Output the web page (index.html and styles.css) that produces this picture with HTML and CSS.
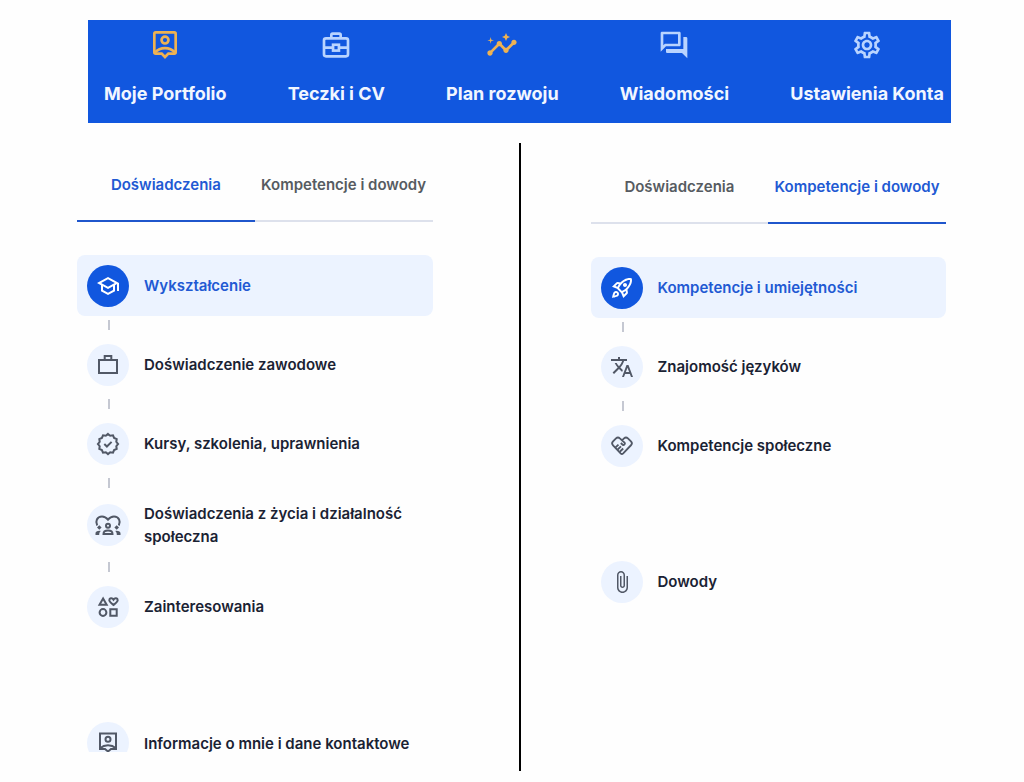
FILE: index.html
```html
<!DOCTYPE html>
<html lang="pl">
<head>
    <meta charset="UTF-8">
    <meta name="viewport" content="width=device-width, initial-scale=1.0">
    <title>Moje Portfolio</title>
    <link rel="stylesheet" href="styles.css">
</head>

<body>
    <nav class="main-nav">
        <a class="nav-link active" href="#portfolio">
            <svg viewBox="0 0 24 24" class="line"><path d="M5 2.500h14a1 1 0 0 1 1 1v14a1 1 0 0 1-1 1h-4.500L12 21l-2.500-2.500H5a1 1 0 0 1-1-1v-14a1 1 0 0 1 1-1z"/><circle cx="12" cy="8.300" r="2.600"/><path d="M4.500 17.500c2-2.200 4.500-3.200 7.500-3.200s5.500 1 7.500 3.200"/></svg>
            <span>Moje Portfolio</span>
        </a>
        <a class="nav-link" href="#teczki">
            <svg viewBox="0 0 24 24" class="line"><rect x="3" y="7" width="18" height="13.500" rx="1.500"/><path d="M8.500 7V4.500a1 1 0 0 1 1-1h5a1 1 0 0 1 1 1V7M3 14h6.500M14.500 14H21"/><rect x="9.800" y="11.800" width="4.400" height="4.400"/></svg>
            <span>Teczki i CV</span>
        </a>
        <a class="nav-link active" href="#plan">
            <svg viewBox="0 0 24 24"><path d="M21 8c-1.450 0-2.260 1.440-1.930 2.510l-3.550 3.560c-.3-.09-.74-.09-1.040 0l-2.550-2.550C12.270 10.450 11.460 9 10 9c-1.450 0-2.270 1.440-1.930 2.520l-4.560 4.550C2.440 15.740 1 16.550 1 18c0 1.100.9 2 2 2 1.450 0 2.260-1.440 1.930-2.510l4.550-4.560c.3.090.74.090 1.040 0l2.550 2.550C12.730 16.550 13.540 18 15 18c1.450 0 2.270-1.440 1.930-2.520l3.560-3.550C21.560 12.260 23 11.450 23 10c0-1.100-.9-2-2-2z"/><path d="M15 9l.94-2.070L18 6l-2.060-.93L15 3l-.92 2.070L12 6l2.080.93zM3.500 11L4 9l2-.5L4 8l-.5-2L3 8l-2 .5L3 9z"/></svg>
            <span>Plan rozwoju</span>
        </a>
        <a class="nav-link" href="#wiadomosci">
            <svg viewBox="0 0 24 24"><path d="M15 4v7H5.170L4 12.170V4h11m1-2H3c-.55 0-1 .45-1 1v14l4-4h10c.55 0 1-.45 1-1V3c0-.55-.45-1-1-1zm5 4h-2v9H6v2c0 .55.45 1 1 1h11l4 4V7c0-.55-.45-1-1-1z"/></svg>
            <span>Wiadomości</span>
        </a>
        <a class="nav-link" href="#ustawienia">
            <svg viewBox="0 0 24 24"><path d="M19.430 12.980c.04-.32.07-.64.07-.98 0-.34-.03-.66-.07-.98l2.110-1.650c.19-.15.24-.42.12-.64l-2-3.460c-.09-.16-.26-.25-.44-.25-.06 0-.12.010-.17.030l-2.490 1c-.52-.4-1.080-.73-1.690-.98l-.38-2.650C14.460 2.180 14.250 2 14 2h-4c-.25 0-.46.180-.49.420l-.38 2.650c-.61.250-1.170.590-1.690.980l-2.490-1c-.06-.02-.12-.03-.18-.03-.17 0-.34.090-.43.250l-2 3.460c-.13.220-.07.490.12.640l2.110 1.650c-.04.320-.07.650-.07.980 0 .33.030.66.070.98l-2.110 1.650c-.19.150-.24.420-.12.640l2 3.460c.09.160.26.250.44.250.06 0 .12-.01.17-.03l2.490-1c.52.400 1.080.730 1.690.980l.38 2.650c.03.240.24.420.49.420h4c.25 0 .46-.18.49-.42l.38-2.650c.61-.25 1.170-.59 1.690-.98l2.490 1c.06.020.12.030.18.030.17 0 .34-.09.43-.25l2-3.460c.12-.22.07-.49-.12-.64l-2.110-1.650zm-1.980-1.710c.04.310.05.520.05.730 0 .21-.02.43-.05.73l-.14 1.130.89.700 1.080.840-.7 1.210-1.270-.51-1.040-.42-.9.680c-.43.320-.84.560-1.250.730l-1.060.43-.16 1.130-.2 1.350h-1.400l-.19-1.350-.16-1.130-1.060-.43c-.43-.18-.83-.41-1.230-.71l-.91-.7-1.060.43-1.270.51-.7-1.210 1.080-.84.890-.7-.14-1.130c-.03-.31-.05-.54-.05-.74s.02-.43.050-.73l.14-1.130-.89-.7-1.080-.84.700-1.210 1.270.51 1.040.42.900-.68c.43-.32.84-.56 1.250-.73l1.060-.43.160-1.130.2-1.350h1.390l.19 1.350.16 1.130 1.060.43c.43.180.83.410 1.230.71l.91.700 1.060-.43 1.270-.51.700 1.210-1.070.85-.89.700.14 1.130zM12 8c-2.210 0-4 1.790-4 4s1.790 4 4 4 4-1.790 4-4-1.790-4-4-4zm0 6c-1.100 0-2-.9-2-2s.9-2 2-2 2 .9 2 2-.9 2-2 2z"/></svg>
            <span>Ustawienia Konta</span>
        </a>
    </nav>

    <main class="panels">
        <section class="panel panel-left">
            <div class="tabs">
                <button type="button" class="tab active">Doświadczenia</button>
                <button type="button" class="tab">Kompetencje i dowody</button>
            </div>
            <ul class="steps">
                <li>
                    <a class="step active" href="#wyksztalcenie">
                        <span class="step-icon"><svg viewBox="0 0 24 24"><path d="M12 3L1 9l4 2.180v6L12 21l7-3.820v-6l2-1.090V17h2V9L12 3zm6.820 6L12 12.720 5.180 9 12 5.280 18.820 9zM17 15.990l-5 2.730-5-2.730v-3.720L12 15l5-2.730v3.720z"/></svg></span>
                        <span class="step-label">Wykształcenie</span>
                    </a>
                </li>
                <li class="linked">
                    <a class="step" href="#zawodowe">
                        <span class="step-icon"><svg viewBox="0 0 24 24" class="line"><path d="M3 7h18v13H3zM8.700 7V3h6.600v4"/></svg></span>
                        <span class="step-label">Doświadczenie zawodowe</span>
                    </a>
                </li>
                <li class="linked">
                    <a class="step" href="#kursy">
                        <span class="step-icon"><svg viewBox="0 0 24 24" class="line"><path d="M12 1.900l2.200 1.800 2.800-.4 1.100 2.600 2.600 1.100-.4 2.800 1.800 2.200-1.800 2.200.4 2.800-2.600 1.100-1.100 2.600-2.800-.4-2.200 1.800-2.200-1.800-2.800.4-1.100-2.600-2.600-1.100.4-2.800L1.900 12l1.800-2.200-.4-2.800 2.600-1.100L7 3.300l2.800.4z"/><path d="M8.300 12l2.600 2.500 4.700-4.600"/></svg></span>
                        <span class="step-label">Kursy, szkolenia, uprawnienia</span>
                    </a>
                </li>
                <li class="linked">
                    <a class="step" href="#spoleczna">
                        <span class="step-icon icon-wide"><svg viewBox="0 0 28 24" class="line"><path d="M3.200 12.500C1 8.500 3 3.500 8 3.500c2.600 0 4.600 1.400 6 3.200 1.400-1.800 3.400-3.200 6-3.200 5 0 7 5 4.800 9"/><circle cx="14" cy="12.800" r="2"/><path d="M9.500 21c0-2.400 2-3.400 4.500-3.400s4.500 1 4.500 3.400z"/><path class="solid" d="M1.500 22v-1.800c0-1.600 1.800-2.600 5.300-2.300-1.300 1.100-1.600 2.200-1.600 4.100zM26.500 22v-1.800c0-1.600-1.800-2.600-5.300-2.300 1.300 1.100 1.600 2.200 1.600 4.100zM5.300 12.200l2.300 2.300-2.300 2.300-2.300-2.300zM22.700 12.200l2.300 2.300-2.300 2.300-2.300-2.300z"/></svg></span>
                        <span class="step-label">Doświadczenia z życia i działalność społeczna</span>
                    </a>
                </li>
                <li class="linked">
                    <a class="step" href="#zainteresowania">
                        <span class="step-icon"><svg viewBox="0 0 24 24" class="line"><path d="M3.500 9.800l3.600-6.300 3.600 6.300z"/><path d="M17.500 10c-2.400-1.900-4.200-3.300-4.200-4.800 0-2.300 3-2.500 4.200-.6 1.200-1.900 4.200-1.700 4.200.6 0 1.500-1.800 2.900-4.200 4.800z"/><circle cx="7" cy="17.500" r="3.400"/><path d="M14.300 14.300h6.400v6.400h-6.400z"/></svg></span>
                        <span class="step-label">Zainteresowania</span>
                    </a>
                </li>
                <li class="separate">
                    <a class="step cut" href="#kontakt">
                        <span class="step-icon"><svg viewBox="0 0 24 24" class="line"><path d="M4 2.500h16v15.500h-5L12 20.500 9 18H4z"/><circle cx="12" cy="8.300" r="2.500"/><path d="M4 17.200c2.400-2 5-2.900 8-2.900s5.600.9 8 2.900"/></svg></span>
                        <span class="step-label">Informacje o mnie i dane kontaktowe</span>
                    </a>
                </li>
            </ul>
        </section>

        <div class="divider"></div>

        <section class="panel panel-right">
            <div class="tabs">
                <button type="button" class="tab">Doświadczenia</button>
                <button type="button" class="tab active">Kompetencje i dowody</button>
            </div>
            <ul class="steps">
                <li>
                    <a class="step active" href="#umiejetnosci">
                        <span class="step-icon"><svg viewBox="0 0 24 24"><path d="M6 15c-.83 0-1.580.34-2.120.88C2.700 17.060 2 22 2 22s4.940-.7 6.120-1.880C8.660 19.580 9 18.830 9 18c0-1.660-1.340-3-3-3zm.71 3.710c-.28.280-2.170.760-2.170.760s.47-1.880.760-2.170c.17-.19.420-.3.700-.3.55 0 1 .45 1 1 0 .28-.11.53-.29.71zM17.420 13.650c6.360-6.360 4.240-11.310 4.240-11.310s-4.950-2.120-11.310 4.240l-2.490-.5c-.65-.13-1.330.08-1.810.55L2 10.690l5 2.140L11.170 17l2.140 5 4.050-4.050c.47-.47.680-1.150.55-1.810l-.49-2.490zM7.410 10.830l-1.910-.82 1.970-1.970 1.440.29c-.57.830-1.080 1.700-1.500 2.500zm6.580 7.670l-.82-1.910c.8-.42 1.670-.93 2.490-1.500l.29 1.440-1.960 1.970zM16 12.240c-1.320 1.320-3.380 2.400-4.040 2.730l-2.930-2.930c.32-.65 1.400-2.710 2.730-4.040 4.680-4.680 8.230-3.990 8.230-3.990s.69 3.550-3.990 8.230zM15 11c1.100 0 2-.9 2-2s-.9-2-2-2-2 .9-2 2 .9 2 2 2z"/></svg></span>
                        <span class="step-label">Kompetencje i umiejętności</span>
                    </a>
                </li>
                <li class="linked">
                    <a class="step" href="#jezyki">
                        <span class="step-icon"><svg viewBox="0 0 24 24"><path d="M12.870 15.070l-2.540-2.510.03-.03c1.740-1.940 2.980-4.170 3.710-6.530H17V4h-7V2H8v2H1v1.990h11.170C11.500 7.920 10.440 9.750 9 11.350 8.070 10.320 7.300 9.190 6.690 8h-2c.73 1.630 1.730 3.170 2.980 4.560l-5.090 5.020L4 19l5-5 3.110 3.110.76-2.040zM18.500 10h-2L12 22h2l1.120-3h4.750L21 22h2l-4.500-12zm-2.620 7l1.620-4.330L19.120 17h-3.240z"/></svg></span>
                        <span class="step-label">Znajomość języków</span>
                    </a>
                </li>
                <li class="linked">
                    <a class="step" href="#spoleczne">
                        <span class="step-icon"><svg viewBox="-1 0 26 24" class="line"><path d="M12 5.900l2.200-2.100a3 3 0 0 1 4.200 0l3.300 3.200a3 3 0 0 1 0 4.200l-8.400 8.700a2 2 0 0 1-2.800 0L2.300 11.200a3 3 0 0 1 0-4.200l3.200-3.200a3 3 0 0 1 4.200 0l5 4.600a1.500 1.500 0 0 1-2 2.200l-2-1.800"/><path d="M5 13.500l3.200-3M7.300 15.800l3.600-3.400M9.600 18.200l3.700-3.500"/></svg></span>
                        <span class="step-label">Kompetencje społeczne</span>
                    </a>
                </li>
                <li class="separate">
                    <a class="step" href="#dowody">
                        <span class="step-icon"><svg viewBox="0 0 24 24"><path d="M16.500 6v11.500c0 2.210-1.790 4-4 4s-4-1.790-4-4V5c0-1.380 1.120-2.500 2.500-2.500s2.500 1.120 2.500 2.500v10.500c0 .55-.45 1-1 1s-1-.45-1-1V6H10v9.500c0 1.380 1.120 2.500 2.500 2.500s2.500-1.120 2.500-2.500V5c0-2.210-1.790-4-4-4S7 2.790 7 5v12.500c0 3.040 2.460 5.500 5.500 5.500s5.500-2.460 5.500-5.500V6h-1.500z"/></svg></span>
                        <span class="step-label">Dowody</span>
                    </a>
                </li>
            </ul>
        </section>
    </main>
</body>
</html>
```

FILE: styles.css
```css
body {
    font-family: Inter, "Liberation Sans", sans-serif;
    font-size: 15px;
    font-weight: 600;
    line-height: 23px;
    color: #1a2233;
    background-color: #fefefe;
    margin: 0;
    padding: 20px 73px 0 77px;
}

a {
    color: inherit;
    text-decoration: none;
}

svg {
    display: block;
    fill: currentColor;
}

.line {
    fill: none;
    stroke: currentColor;
    stroke-width: 2;
}

.solid {
    fill: currentColor;
    stroke: none;
}

/* Top bar */
.main-nav {
    display: flex;
    justify-content: space-between;
    margin-left: 11px;
    padding: 9px 7px 17px 16px;
    background: #1157df;
}

.nav-link {
    display: flex;
    flex-direction: column;
    align-items: center;
    gap: 21px;
    color: #f1f6ff;
    font-size: 18px;
    font-weight: 700;
    line-height: 24px;
    white-space: nowrap;
}

.nav-link svg {
    width: 32px;
    height: 32px;
    color: #b9d4ff;
}

.nav-link.active svg {
    color: #eeb252;
}

/* Two columns with a line between them */
.panels {
    display: flex;
    margin: 20px 5px 0 0;
}

.panel {
    flex: 1;
    min-width: 0;
}

.panel-left {
    padding: 6px 0 19px;
}

.panel-right {
    padding-top: 8px;
}

.divider {
    width: 2px;
    margin: 0 70px 0 86px;
    background: #000;
}

.tabs {
    display: grid;
    grid-template-columns: 1fr 1fr;
}

.tab {
    padding: 24px 0;
    border: none;
    border-bottom: 2px solid #dde1ec;
    background: none;
    color: #565b61;
    font: inherit;
    white-space: nowrap;
}

.tab.active {
    color: #2159d3;
    border-color: #1f56cc;
}

.steps {
    list-style: none;
    margin: 33px 0 0;
    padding: 0;
}

.step {
    display: flex;
    align-items: center;
    gap: 15px;
    min-height: 61px;
    padding: 0 10px;
    border-radius: 8px;
}

.step.active {
    background: #ecf3ff;
    color: #2159d3;
}

.step-icon {
    display: flex;
    flex-shrink: 0;
    align-items: center;
    justify-content: center;
    width: 42px;
    height: 42px;
    border-radius: 50%;
    background: #ecf3ff;
    color: #515866;
}

.step.active .step-icon {
    background: #1157df;
    color: #fff;
}

.step-icon svg {
    width: 24px;
    height: 24px;
}

.icon-wide svg {
    width: 28px;
}

.step-label {
    padding: 10px 0;
}

.linked::before {
    content: "";
    display: block;
    width: 2px;
    height: 10px;
    margin: 4px 0 4px 31px;
    background: #c5c8d2;
}

.separate {
    margin-top: 75px;
}

/* Last entry runs under the lower edge of the list */
.step.cut {
    align-items: flex-start;
    min-height: 0;
    height: 30px;
    padding-top: 10px;
    border-radius: 0;
    overflow: hidden;
}
```
